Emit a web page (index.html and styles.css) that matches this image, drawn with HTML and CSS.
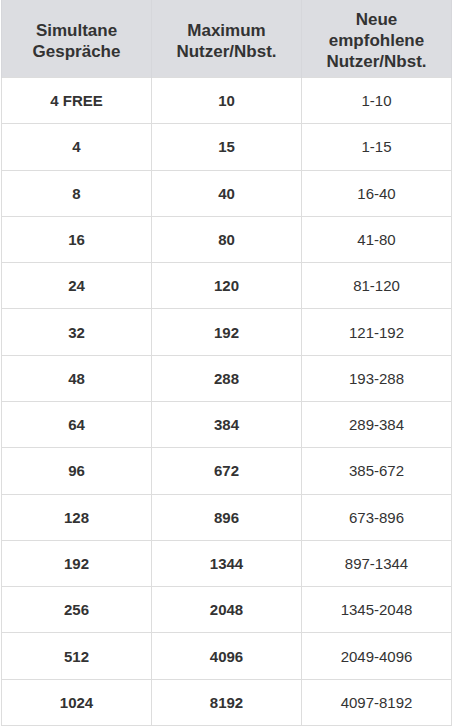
FILE: index.html
```html
<!DOCTYPE html>
<html lang="de">
<head>
<meta charset="utf-8">
<link rel="stylesheet" href="styles.css">
</head>
<body>
<table class="plans">
  <thead>
    <tr>
      <th>Simultane<br>Gespräche</th>
      <th>Maximum<br>Nutzer/Nbst.</th>
      <th>Neue<br>empfohlene<br>Nutzer/Nbst.</th>
    </tr>
  </thead>
  <tbody>
    <tr><td class="b">4 FREE</td><td class="b">10</td><td>1-10</td></tr>
    <tr><td class="b">4</td><td class="b">15</td><td>1-15</td></tr>
    <tr><td class="b">8</td><td class="b">40</td><td>16-40</td></tr>
    <tr><td class="b">16</td><td class="b">80</td><td>41-80</td></tr>
    <tr><td class="b">24</td><td class="b">120</td><td>81-120</td></tr>
    <tr><td class="b">32</td><td class="b">192</td><td>121-192</td></tr>
    <tr><td class="b">48</td><td class="b">288</td><td>193-288</td></tr>
    <tr><td class="b">64</td><td class="b">384</td><td>289-384</td></tr>
    <tr><td class="b">96</td><td class="b">672</td><td>385-672</td></tr>
    <tr><td class="b">128</td><td class="b">896</td><td>673-896</td></tr>
    <tr><td class="b">192</td><td class="b">1344</td><td>897-1344</td></tr>
    <tr><td class="b">256</td><td class="b">2048</td><td>1345-2048</td></tr>
    <tr><td class="b">512</td><td class="b">4096</td><td>2049-4096</td></tr>
    <tr><td class="b">1024</td><td class="b">8192</td><td>4097-8192</td></tr>
  </tbody>
</table>
</body>
</html>
```
FILE: styles.css
```css
html, body {
  margin: 0;
  padding: 0;
  background: #ffffff;
}
body {
  padding-left: 1px;
  font-family: "Liberation Sans", Arial, sans-serif;
  font-size: 15px;
  color: #333333;
}
.plans {
  border-collapse: collapse;
  width: 451px;
  table-layout: fixed;
}
.plans th {
  background: #dcdde1;
  font-weight: bold;
  font-size: 17px;
  line-height: 21px;
  padding: 9px 2px 5px;
  text-align: center;
  vertical-align: middle;
  border-left: 1px solid #d6d7db;
  border-right: 1px solid #d6d7db;
}
.plans td {
  line-height: 21px;
  padding: 12.15px 4px;
  text-align: center;
  vertical-align: middle;
  border: 1px solid #dddddd;
}
.plans td.b {
  font-weight: bold;
}
```
